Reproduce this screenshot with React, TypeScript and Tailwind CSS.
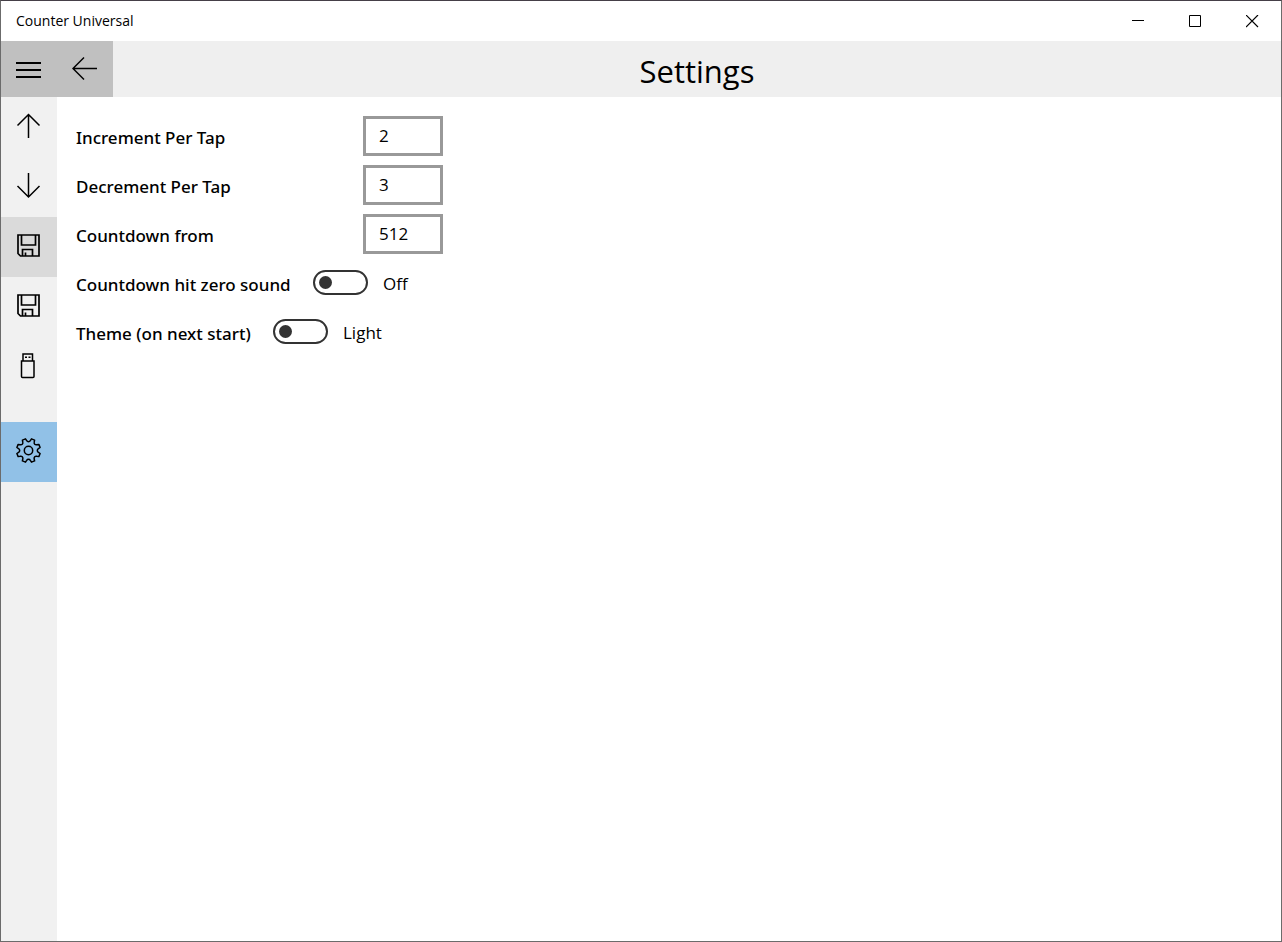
import { useState } from "react";
import type { ReactNode } from "react";

const TEETH = 8;

function gearPath(c: number, outer: number, inner: number): string {
  const at = (r: number, deg: number) => {
    const a = (deg * Math.PI) / 180;
    return `${(c + r * Math.sin(a)).toFixed(2)} ${(c - r * Math.cos(a)).toFixed(2)}`;
  };
  let d = "";
  for (let i = 0; i < TEETH; i++) {
    const m = 22.5 + i * 45;
    d += `${i === 0 ? "M" : "L"}${at(outer, m - 8)} L${at(outer, m + 8)} `;
    d += `L${at(inner + 0.9, m + 12)} C${at(inner - 0.7, m + 16)} ${at(inner - 0.7, m + 29)} ${at(inner + 0.9, m + 33)} `;
  }
  return d + "Z";
}

function Icon({ children, size = 26, width = 1.5 }: { children: ReactNode; size?: number; width?: number }) {
  return (
    <svg
      width={size}
      height={size}
      viewBox={`0 0 ${size} ${size}`}
      fill="none"
      stroke="#000"
      strokeWidth={width}
      aria-hidden="true"
      className="shrink-0"
    >
      {children}
    </svg>
  );
}

const MenuIcon = () => (
  <Icon width={2}>
    <path d="M0 7h25M0 14h25M0 21h25" />
  </Icon>
);
const BackIcon = () => (
  <Icon>
    <path d="M25 12.5H1M12 1.5l-11 11 11 11" />
  </Icon>
);
const UpIcon = () => (
  <Icon>
    <path d="M12.5 25V1.5M1.5 12.5l11-11 11 11" />
  </Icon>
);
const DownIcon = () => (
  <Icon>
    <path d="M12.5 0v24M1.5 13l11 11 11-11" />
  </Icon>
);
const SaveIcon = () => (
  <Icon width={1.7}>
    <path d="M2 2h21v21H4.5L2 20.5zM5.5 2v10h14V2M6.5 23v-6.5h10V23M9.5 23v-3.5" />
  </Icon>
);
const UsbIcon = () => (
  <Icon>
    <path d="M5.5 8H18v15.5q0 1-1 1H6.5q-1 0-1-1zM7 8V1h9.5v7" />
    <path d="M9 4.2h2M12.5 4.2h2" />
  </Icon>
);
const GearIcon = () => (
  <Icon>
    <path d={gearPath(12.5, 12, 9.2)} strokeLinejoin="round" />
    <circle cx="12.5" cy="12.5" r="4.2" />
  </Icon>
);

const navItems = [
  { label: "Increment", icon: <UpIcon />, style: "" },
  { label: "Decrement", icon: <DownIcon />, style: "" },
  { label: "Save", icon: <SaveIcon />, style: "bg-[#dadada]" },
  { label: "Save as", icon: <SaveIcon />, style: "" },
  { label: "Storage", icon: <UsbIcon />, style: "" },
  { label: "Settings", icon: <GearIcon />, style: "mt-[25px] bg-[#91c1e7]" },
];

function NumberRow({ id, label, initial }: { id: string; label: string; initial: string }) {
  const [value, setValue] = useState(initial);
  return (
    <div className="flex h-10 items-center">
      <label htmlFor={id} className="w-[287px] pt-1 font-['Noto_Sans',sans-serif] font-medium">
        {label}
      </label>
      <input
        id={id}
        inputMode="numeric"
        value={value}
        onChange={(e) => setValue(e.target.value)}
        className="h-10 w-20 border-3 border-[#999] bg-white px-[13px] pb-0.5 outline-none"
      />
    </div>
  );
}

type ToggleRowProps = { id: string; label: string; off: string; on: string; labelWidth: string };

function ToggleRow({ id, label, off, on, labelWidth }: ToggleRowProps) {
  const [checked, setChecked] = useState(false);
  return (
    <div className="flex h-10 items-center">
      <label htmlFor={id} className={`pt-1 font-['Noto_Sans',sans-serif] font-medium whitespace-nowrap ${labelWidth}`}>
        {label}
      </label>
      <input
        id={id}
        type="checkbox"
        role="switch"
        checked={checked}
        onChange={(e) => setChecked(e.target.checked)}
        className="mb-0.5 flex h-[25px] w-[55px] appearance-none items-center rounded-full border-[2px] border-[#333] px-1 before:size-[13px] before:rounded-full before:bg-[#333] checked:justify-end"
      />
      <span className="ml-[15px] pt-0.5">{checked ? on : off}</span>
    </div>
  );
}

export default function App() {
  return (
    <div className="flex min-h-screen flex-col border border-[#6b6b6b] border-t-[#453f47] bg-white font-['Open_Sans','Noto_Sans',sans-serif] text-[17px] leading-6 text-black">
      <div className="flex h-10 items-center justify-between pl-[15px]">
        <span className="text-[14px]">Counter Universal</span>
        <div className="flex h-full">
          <button aria-label="Minimize" className="flex w-[57px] items-center justify-center">
            <Icon size={13} width={1}>
              <path d="M0 5.5h12" />
            </Icon>
          </button>
          <button aria-label="Maximize" className="flex w-[57px] items-center justify-center">
            <Icon size={13} width={1}>
              <path d="M0.5 0.5h11v11h-11z" />
            </Icon>
          </button>
          <button aria-label="Close" className="flex w-[57px] items-center justify-center">
            <Icon size={13} width={1.2}>
              <path d="M0 0l12 12M12 0l-12 12" />
            </Icon>
          </button>
        </div>
      </div>

      <header className="flex h-14 bg-[#efefef]">
        <button aria-label="Menu" className="flex w-14 items-center justify-center bg-[#c0c0c0]">
          <MenuIcon />
        </button>
        <button aria-label="Back" className="flex w-14 items-center justify-center bg-[#c0c0c0]">
          <BackIcon />
        </button>
        <h1 className="flex flex-1 items-center justify-center pt-1 text-[31px] leading-10">Settings</h1>
      </header>

      <div className="flex flex-1">
        <nav className="flex w-14 flex-col bg-[#f1f1f1]">
          {navItems.map((item) => (
            <button
              key={item.label}
              aria-label={item.label}
              className={`flex h-[60px] items-center justify-center pb-0.5 ${item.style}`}
            >
              {item.icon}
            </button>
          ))}
        </nav>
        <main className="flex flex-1 flex-col gap-[9px] pt-[19px] pl-[19px]">
          <NumberRow id="increment" label="Increment Per Tap" initial="2" />
          <NumberRow id="decrement" label="Decrement Per Tap" initial="3" />
          <NumberRow id="countdown" label="Countdown from" initial="512" />
          <ToggleRow id="sound" label="Countdown hit zero sound" off="Off" on="On" labelWidth="w-[237px]" />
          <ToggleRow id="theme" label="Theme (on next start)" off="Light" on="Dark" labelWidth="w-[197px]" />
        </main>
      </div>
    </div>
  );
}
